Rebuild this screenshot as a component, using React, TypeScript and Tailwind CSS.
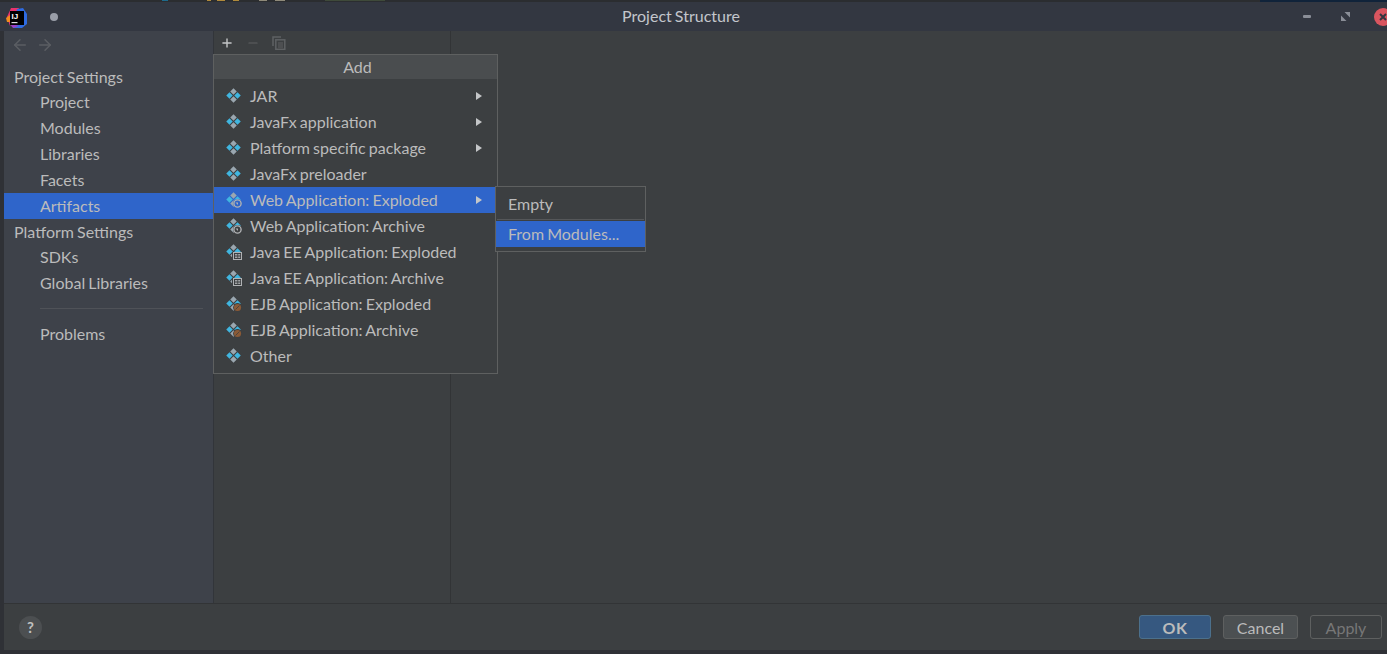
import { ArrowLeft, ArrowRight, Minus, Plus } from 'lucide-react'

function Diamond() {
  return (
    <>
      <rect x="5.2" y="1.2" width="4.6" height="4.6" transform="rotate(45 7.5 3.5)" fill="#9aa7b0" />
      <rect x="5.2" y="9.2" width="4.6" height="4.6" transform="rotate(45 7.5 11.5)" fill="#9aa7b0" />
      <rect x="1.2" y="5.2" width="4.6" height="4.6" transform="rotate(45 3.5 7.5)" fill="#40b6e0" />
      <rect x="9.2" y="5.2" width="4.6" height="4.6" transform="rotate(45 11.5 7.5)" fill="#40b6e0" />
    </>
  )
}

function ArtifactIcon({ kind, active }: { kind: 'plain' | 'web' | 'ee' | 'ejb'; active?: boolean }) {
  const under = active ? '#2f65ca' : '#3c3f41'
  return (
    <svg width="16" height="16" viewBox="0 0 16 16" className="shrink-0">
      <Diamond />
      {kind === 'web' && (
        <>
          <circle cx="11.5" cy="11.5" r="4.5" fill={under} />
          <circle cx="11.5" cy="11.5" r="3.6" fill="none" stroke="#afb1b3" strokeWidth="1.4" />
          <path d="M9.5 10.5h2.5v2.5z" fill="#afb1b3" />
        </>
      )}
      {kind === 'ee' && (
        <>
          <rect x="6" y="8" width="10" height="8" fill={under} />
          <rect x="7.5" y="8.5" width="8" height="7" fill="none" stroke="#afb1b3" />
          <path d="M9 10.5h2.4M9 12h2.4M9 13.5h2.4M12.2 10.5h2M12.2 12h2M12.2 13.5h2" stroke="#afb1b3" strokeWidth="0.9" />
        </>
      )}
      {kind === 'ejb' && (
        <>
          <circle cx="11.5" cy="11.5" r="4.4" fill={under} />
          <circle cx="11.5" cy="11.5" r="3.6" fill="#8a5a36" />
          <path d="M9.5 13.5l4-4" stroke={under} strokeWidth="0.8" />
        </>
      )}
    </svg>
  )
}

function Arrow() {
  return (
    <svg width="8" height="8" viewBox="0 0 8 8" className="shrink-0">
      <path d="M1 0l6 4-6 4z" fill="#c4c6c8" />
    </svg>
  )
}

const menuRows: { label: string; kind: 'plain' | 'web' | 'ee' | 'ejb'; arrow?: boolean; active?: boolean }[] = [
  { label: 'JAR', kind: 'plain', arrow: true },
  { label: 'JavaFx application', kind: 'plain', arrow: true },
  { label: 'Platform specific package', kind: 'plain', arrow: true },
  { label: 'JavaFx preloader', kind: 'plain' },
  { label: 'Web Application: Exploded', kind: 'web', arrow: true, active: true },
  { label: 'Web Application: Archive', kind: 'web' },
  { label: 'Java EE Application: Exploded', kind: 'ee' },
  { label: 'Java EE Application: Archive', kind: 'ee' },
  { label: 'EJB Application: Exploded', kind: 'ejb' },
  { label: 'EJB Application: Archive', kind: 'ejb' },
  { label: 'Other', kind: 'plain' },
]

function SideItem({ label, active }: { label: string; active?: boolean }) {
  return (
    <div className={['h-[26px] pl-[36px] leading-[26px]', active ? 'bg-[#2f65ca]' : ''].join(' ')}>{label}</div>
  )
}

function AddMenu() {
  return (
    <div className="absolute left-[213px] top-[54px] z-10 h-[320px] w-[285px] border border-[#5e6060] bg-[#3c3f41]">
      <div className="h-[24px] bg-[#4a4d4f] pl-[4px] text-center leading-[24px]">Add</div>
      <div className="pt-[4px]">
        {menuRows.map((r) => (
          <div key={r.label} className={['flex h-[26px] items-center pl-[12px] pr-[14px]', r.active ? 'bg-[#2f65ca]' : ''].join(' ')}>
            <ArtifactIcon kind={r.kind} active={r.active} />
            <span className="ml-[8px] flex-1 leading-[26px]">{r.label}</span>
            {r.arrow && <Arrow />}
          </div>
        ))}
      </div>
    </div>
  )
}

function SubMenu() {
  return (
    <div className="absolute left-[495px] top-[186px] z-20 h-[66px] w-[151px] border border-[#5e6060] bg-[#3c3f41]">
      <div className="h-[32px] pl-[12px] leading-[34px]">Empty</div>
      <div className="mx-[1px] h-px bg-[#555759]" />
      <div className="mt-px h-[26px] bg-[#2f65ca] pl-[12px] leading-[26px]">From Modules...</div>
    </div>
  )
}

export default function App() {
  return (
    <div className="relative flex h-[654px] w-[1387px] flex-col overflow-hidden bg-[#2f3136] font-[Lato,sans-serif] text-[16px] text-[#bbbbbb] [word-spacing:-1px]">
      {/* sliver of the window behind the dialog */}
      <div className="flex h-[2px] items-start bg-[#2b2d30]">
        <div className="ml-[162px] h-px w-[6px] bg-[#1e6a8c]" />
        <div className="ml-[39px] h-px w-[4px] bg-[#b08a3c]" />
        <div className="ml-[6px] h-px w-[8px] bg-[#b08a3c]" />
        <div className="ml-[8px] h-px w-[6px] bg-[#b08a3c]" />
        <div className="ml-[20px] h-px w-[8px] bg-[#8f8a7a]" />
        <div className="ml-[8px] h-px w-[10px] bg-[#8f8a7a]" />
        <div className="ml-[40px] h-px w-[60px] bg-[#3f4a3a]" />
        <div className="ml-auto h-full w-[127px] bg-[#10233a]" />
      </div>
      <div className="relative flex h-[29px] items-center bg-[#333741] pl-[6px]">
        <svg width="22" height="22" viewBox="0 0 22 22" className="mt-[2px] shrink-0">
          <path d="M1 10L5 1h8L9 12 4 19z" fill="#e8336d" />
          <path d="M11 2l6-1 4 6v10l-5 4H7z" fill="#2f6be0" />
          <path d="M0 11l4-3v7H1z" fill="#f28b1e" />
          <path d="M3 16l10 3-6 2z" fill="#9b3fc4" />
          <rect x="4" y="4" width="14" height="14" fill="#000" />
          <rect x="5.5" y="15" width="6" height="1.2" fill="#ddd" />
          <text x="5.5" y="12" fontSize="8" fontWeight="700" fill="#fff" fontFamily="Liberation Sans">IJ</text>
        </svg>
        <span className="ml-[22px] h-[8px] w-[8px] rounded-full bg-[#9a9ea8]" />
        <span className="absolute left-0 right-[25px] pb-[2px] text-center text-[16px] text-[#c3c6cc]">Project Structure</span>
        <div className="absolute right-[-5px] top-0 flex h-full items-center">
          <span className="mr-[30px] h-[3px] w-[8px] rounded-[1px] bg-[#8a8e97]" />
          <svg width="9" height="9" viewBox="0 0 9 9" className="mr-[24px]">
            <path d="M3.5 0H9v5.5zM0 3.5L5.5 9H0z" fill="#8a8e97" />
          </svg>
          <span className="flex h-[18px] w-[18px] items-center justify-center rounded-full bg-[#d9555f]">
            <svg width="8" height="8" viewBox="0 0 8 8" stroke="#333741" strokeWidth="2">
              <path d="M1 1l6 6M7 1l-6 6" />
            </svg>
          </span>
        </div>
      </div>

      <div className="flex min-h-0 flex-1 pl-[4px]">
        <div className="w-[209px] shrink-0 bg-[#3e424a]">
          <div className="flex h-[28px] items-center gap-[7px] pl-[7px] text-[#5b5e63]">
            <ArrowLeft size={18} strokeWidth={2} />
            <ArrowRight size={18} strokeWidth={2} />
          </div>
          <div className="h-[31px] pl-[10px] pt-[5px] leading-[26px]">Project Settings</div>
          <div className="-mt-[1px]">
            <SideItem label="Project" />
            <SideItem label="Modules" />
            <SideItem label="Libraries" />
            <SideItem label="Facets" />
            <SideItem label="Artifacts" active />
          </div>
          <div className="h-[26px] pl-[10px] leading-[26px]">Platform Settings</div>
          <div className="-mt-[1px]">
            <SideItem label="SDKs" />
            <SideItem label="Global Libraries" />
          </div>
          <div className="ml-[36px] mr-[10px] mt-[12px] h-px bg-[#4f5258]" />
          <div className="mt-[12px]">
            <SideItem label="Problems" />
          </div>
        </div>
        <div className="w-px bg-[#32353a]" />
        <div className="w-[236px] shrink-0 bg-[#3c3f41]">
          <div className="flex h-[24px] items-center pl-[6px]">
            <Plus size={14} strokeWidth={2.4} className="text-[#c4c6c8]" />
            <Minus size={14} strokeWidth={2} className="ml-[12px] text-[#5e6163]" />
            <svg width="14" height="14" viewBox="0 0 14 14" fill="none" stroke="#5e6163" strokeWidth="1.5" className="ml-[12px]">
              <path d="M1 10V1h8" />
              <rect x="3.8" y="3.8" width="9" height="9.5" />
              <path d="M6 7h5M6 9h5M6 11h5" strokeWidth="1" />
            </svg>
          </div>
        </div>
        <div className="w-px bg-[#323436]" />
        <div className="flex-1 bg-[#3c3f41]" />
      </div>

      <div className="ml-[4px] flex h-[47px] items-center border-t border-[#323436] bg-[#3c3f41]">
        <span className="ml-[15px] flex h-[23px] w-[23px] items-center justify-center rounded-full bg-[#4c4f51] text-[15px] font-bold text-[#c0c0c0]">?</span>
        <div className="ml-auto flex items-center pb-[1px] pr-[5px]">
          <button className="h-[24px] w-[72px] rounded-[3px] border border-[#4c708c] bg-[#365880] pt-[2px] text-[16px] font-bold leading-[20px] tracking-[0.5px] text-[#bbbbbb]">OK</button>
          <button className="ml-[12px] h-[24px] w-[75px] rounded-[3px] border border-[#5e6060] bg-[#4c5052] pt-[2px] text-[16px] leading-[20px] text-[#bbbbbb]">Cancel</button>
          <button className="ml-[12px] h-[24px] w-[72px] rounded-[3px] border border-[#5e6060] bg-[#3c3f41] pt-[2px] text-[16px] leading-[20px] text-[#777777]">Apply</button>
        </div>
      </div>
      <div className="h-[4px] bg-[#2f3136]" />

      <AddMenu />
      <SubMenu />
    </div>
  )
}
